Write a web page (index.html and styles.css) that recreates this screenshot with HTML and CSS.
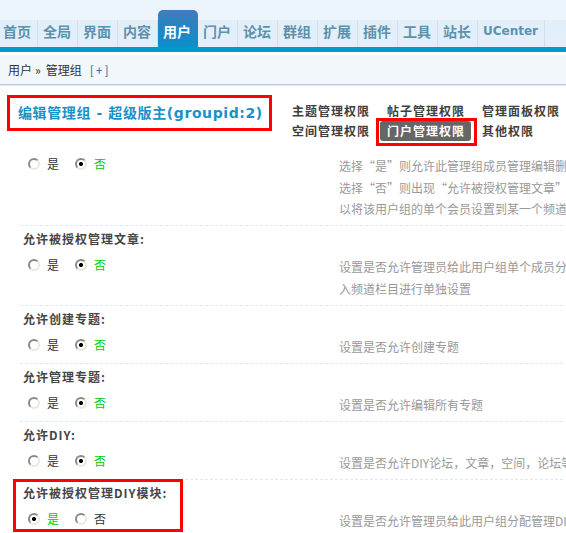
FILE: index.html
```html
<!DOCTYPE html>
<html lang="zh-CN">
<head>
<meta charset="utf-8">
<title>编辑管理组 - 超级版主</title>
<link rel="stylesheet" href="styles.css">
</head>
<body>
<div class="header">
  <ul class="nav">
    <li><a>首页</a></li>
    <li><a>全局</a></li>
    <li><a>界面</a></li>
    <li><a>内容</a></li>
    <li class="on"><a>用户</a></li>
    <li><a>门户</a></li>
    <li><a>论坛</a></li>
    <li><a>群组</a></li>
    <li><a>扩展</a></li>
    <li><a>插件</a></li>
    <li><a>工具</a></li>
    <li><a>站长</a></li>
    <li class="uc"><a>UCenter</a></li>
  </ul>
</div>

<div class="crumb">用户<span class="sep">&raquo;</span>管理组<a class="add">[+]</a></div>

<div class="titlebar">
  <h3 class="title">编辑管理组 - 超级版主(groupid:2)</h3>
  <ul class="subtabs">
    <li>主题管理权限</li>
    <li>帖子管理权限</li>
    <li>管理面板权限</li>
    <li>空间管理权限</li>
    <li class="current">门户管理权限</li>
    <li>其他权限</li>
  </ul>
</div>

<div class="form">
  <div class="item first">
    <div class="row">
      <div class="opts">
        <label><input type="radio" class="radio" name="allowmanagearticle"><span>是</span></label>
        <label class="checked"><input type="radio" class="radio" name="allowmanagearticle" checked><span>否</span></label>
      </div>
      <div class="tips fw">选择“是”则允许此管理组成员管理编辑删除所有频道栏目的文章<br>选择“否”则出现“允许被授权管理文章”选项，可<br>以将该用户组的单个会员设置到某一个频道栏目进行管理</div>
    </div>
  </div>

  <div class="item">
    <div class="label">允许被授权管理文章:</div>
    <div class="row">
      <div class="opts">
        <label><input type="radio" class="radio" name="allowauthorizedarticle"><span>是</span></label>
        <label class="checked"><input type="radio" class="radio" name="allowauthorizedarticle" checked><span>否</span></label>
      </div>
      <div class="tips">设置是否允许管理员给此用户组单个成员分配频道栏目的管理权限，可以将其加<br>入频道栏目进行单独设置</div>
    </div>
  </div>

  <div class="item">
    <div class="label">允许创建专题:</div>
    <div class="row">
      <div class="opts">
        <label><input type="radio" class="radio" name="allowpostarticle"><span>是</span></label>
        <label class="checked"><input type="radio" class="radio" name="allowpostarticle" checked><span>否</span></label>
      </div>
      <div class="tips">设置是否允许创建专题</div>
    </div>
  </div>

  <div class="item">
    <div class="label">允许管理专题:</div>
    <div class="row">
      <div class="opts">
        <label><input type="radio" class="radio" name="allowmanagetopic"><span>是</span></label>
        <label class="checked"><input type="radio" class="radio" name="allowmanagetopic" checked><span>否</span></label>
      </div>
      <div class="tips">设置是否允许编辑所有专题</div>
    </div>
  </div>

  <div class="item">
    <div class="label">允许DIY:</div>
    <div class="row">
      <div class="opts">
        <label><input type="radio" class="radio" name="allowdiy"><span>是</span></label>
        <label class="checked"><input type="radio" class="radio" name="allowdiy" checked><span>否</span></label>
      </div>
      <div class="tips">设置是否允许DIY论坛，文章，空间，论坛等页面</div>
    </div>
  </div>

  <div class="item marked">
    <div class="label">允许被授权管理DIY模块:</div>
    <div class="row">
      <div class="opts">
        <label class="checked"><input type="radio" class="radio" name="allowauthorizedblock" checked><span>是</span></label>
        <label><input type="radio" class="radio" name="allowauthorizedblock"><span>否</span></label>
      </div>
      <div class="tips">设置是否允许管理员给此用户组分配管理DIY模块的权限</div>
    </div>
  </div>
</div>
</body>
</html>
```

FILE: styles.css
```css
html, body {
  overflow: hidden;
}

body {
  margin: 0;
  background: #fff;
  color: #333;
  font: 12px "Noto Sans CJK SC", sans-serif;
}

ul {
  list-style: none;
  margin: 0;
  padding: 0;
}

/* top navigation */
.header {
  height: 47px;
  background: linear-gradient(#edf5fc 0, #edf5fc 20px, #e2eff8 20px, #e4f0f9 47px);
  border-bottom: 5px solid #0099cc;
}

.nav {
  display: flex;
  margin-left: -2px;
  padding-top: 10px;
}

.nav li a {
  display: block;
  height: 30px;
  padding: 7px 6px 0 5px;
  line-height: 28px;
  font-size: 14px;
  font-weight: bold;
  color: #5b92af;
  border-right: 1px solid #cfe1ed;
  border-image: linear-gradient(transparent 10px, #cfe1ed 10px) 1;
  white-space: nowrap;
}

.nav li.on a {
  color: #fff;
  border-radius: 5px 5px 0 0;
  border-right-color: transparent;
  border-image: none;
  background: linear-gradient(#407dbc, #2683c2 45%, #0b90cb);
}

.nav li.uc a {
  font-family: "DejaVu Sans", sans-serif;
  font-size: 12px;
}

/* breadcrumb */
.crumb {
  margin-top: 3px;
  height: 29px;
  line-height: 29px;
  padding-left: 8px;
  background: #f1f7fb;
  border-bottom: 1px solid #b8d0dc;
  box-shadow: 0 1px 0 #dde9ef;
  color: #333;
  white-space: nowrap;
}

.crumb .sep {
  margin: 0 5px 0 3px;
}

.crumb .add {
  margin-left: 8px;
  color: #2464a6;
  letter-spacing: 2px;
}

/* title and permission tabs */
.titlebar {
  display: flex;
  align-items: flex-start;
  padding: 9px 0 0 7px;
  margin-top: 1px;
}

.title {
  box-sizing: border-box;
  width: 266px;
  height: 36px;
  margin: 0;
  padding-left: 8px;
  border: 3px solid #f00;
  line-height: 30px;
  font-family: "DejaVu Sans", "Noto Sans CJK SC", sans-serif;
  font-size: 14px;
  font-weight: bold;
  letter-spacing: 0.6px;
  color: #1891c9;
  white-space: nowrap;
}

.subtabs {
  display: grid;
  grid-template-columns: repeat(3, 91px);
  column-gap: 4px;
  margin: 6px 0 0 13px;
}

.subtabs li {
  height: 20px;
  line-height: 20px;
  padding: 0 7px;
  font-weight: bold;
  letter-spacing: 1px;
  color: #3e3e3e;
  white-space: nowrap;
}

.subtabs li.current {
  position: relative;
  background: #666;
  color: #fff;
  border-radius: 3px;
}

.subtabs li.current::after {
  content: "";
  position: absolute;
  top: -3px;
  left: -4px;
  right: -6px;
  bottom: -5px;
  border: 3px solid #f00;
}

/* settings list */
.form {
  padding-top: 5px;
}

.item {
  position: relative;
  margin: 0 3px 0 20px;
  border-top: 1px dashed #d8ebf8;
}

.item.first {
  border-top: 0;
}

.label {
  height: 16px;
  padding: 5px 0 0 3px;
  line-height: 16px;
  font-weight: bold;
  letter-spacing: 1px;
  color: #454545;
  white-space: nowrap;
}

.row {
  display: flex;
  align-items: flex-start;
  padding-bottom: 5.5px;
}

.opts {
  display: flex;
  flex: 0 0 311px;
  height: 20px;
  margin-top: 8px;
  padding-left: 8px;
  line-height: 20px;
  color: #333;
}

.opts label {
  display: flex;
  align-items: center;
  margin-right: 16px;
}

.opts label span {
  margin-left: 7px;
}

.opts label.checked span {
  color: #00cc00;
}

.radio {
  appearance: none;
  box-sizing: border-box;
  width: 12px;
  height: 12px;
  margin: 0;
  border-radius: 50%;
  border: 2px solid;
  border-color: #8a8a86 #ebe9dd #ebe9dd #8a8a86;
  background: #fff;
}

.radio:checked {
  background: radial-gradient(circle, #000 0, #000 1.6px, #fff 2.4px);
}

.tips {
  margin-top: 9px;
  line-height: 21.5px;
  color: #999;
  white-space: nowrap;
}

.tips.fw {
  font-feature-settings: "fwid";
}

.item.marked::after {
  content: "";
  position: absolute;
  top: -1px;
  left: -7px;
  width: 170px;
  height: 53px;
  box-sizing: border-box;
  border: 3px solid #f00;
}
```
